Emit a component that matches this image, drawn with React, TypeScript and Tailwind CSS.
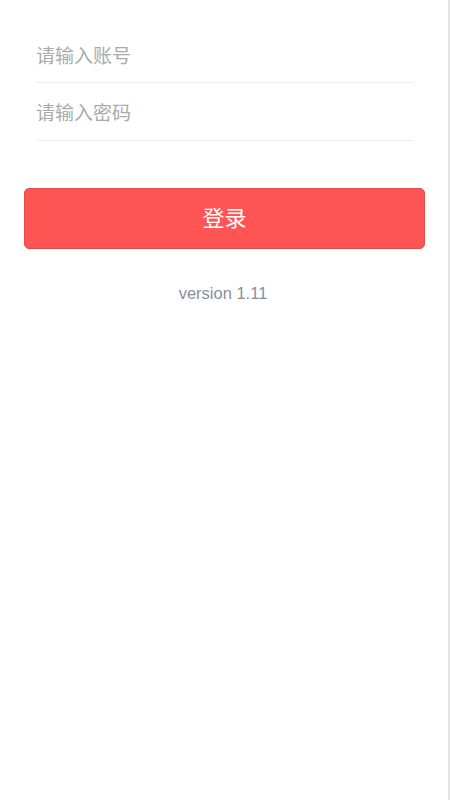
export default function App() {
  return (
    <div
      className="min-h-[800px] w-full bg-white border-r-2 border-[#e4e4e4]"
      style={{ fontFamily: '"Liberation Sans", "Noto Sans CJK SC", sans-serif' }}
    >
      <div className="pt-[28px]">
        <div className="mx-[36px] w-[377px]">
          <div className="h-[55px] flex items-center border-b border-[#eeeeee]">
            <input
              type="text"
              placeholder="请输入账号"
              className="w-full pt-[4px] bg-transparent text-[19px] text-[#333] placeholder:text-[#aaaaaa] outline-none"
            />
          </div>
          <div className="h-[58px] flex items-center border-b border-[#eeeeee]">
            <input
              type="password"
              placeholder="请输入密码"
              className="w-full pt-[5px] bg-transparent text-[19px] text-[#333] placeholder:text-[#aaaaaa] outline-none"
            />
          </div>
        </div>
        <div className="px-[24px] mt-[47px]">
          <button className="w-[401px] h-[61px] rounded-[5px] bg-[#ff5454] text-white text-[22px] border border-[#e84c4c]">
            登录
          </button>
        </div>
        <p className="mt-[32px] text-center text-[16.5px] text-[#87909a] pr-[2px]">version 1.11</p>
      </div>
    </div>
  );
}
